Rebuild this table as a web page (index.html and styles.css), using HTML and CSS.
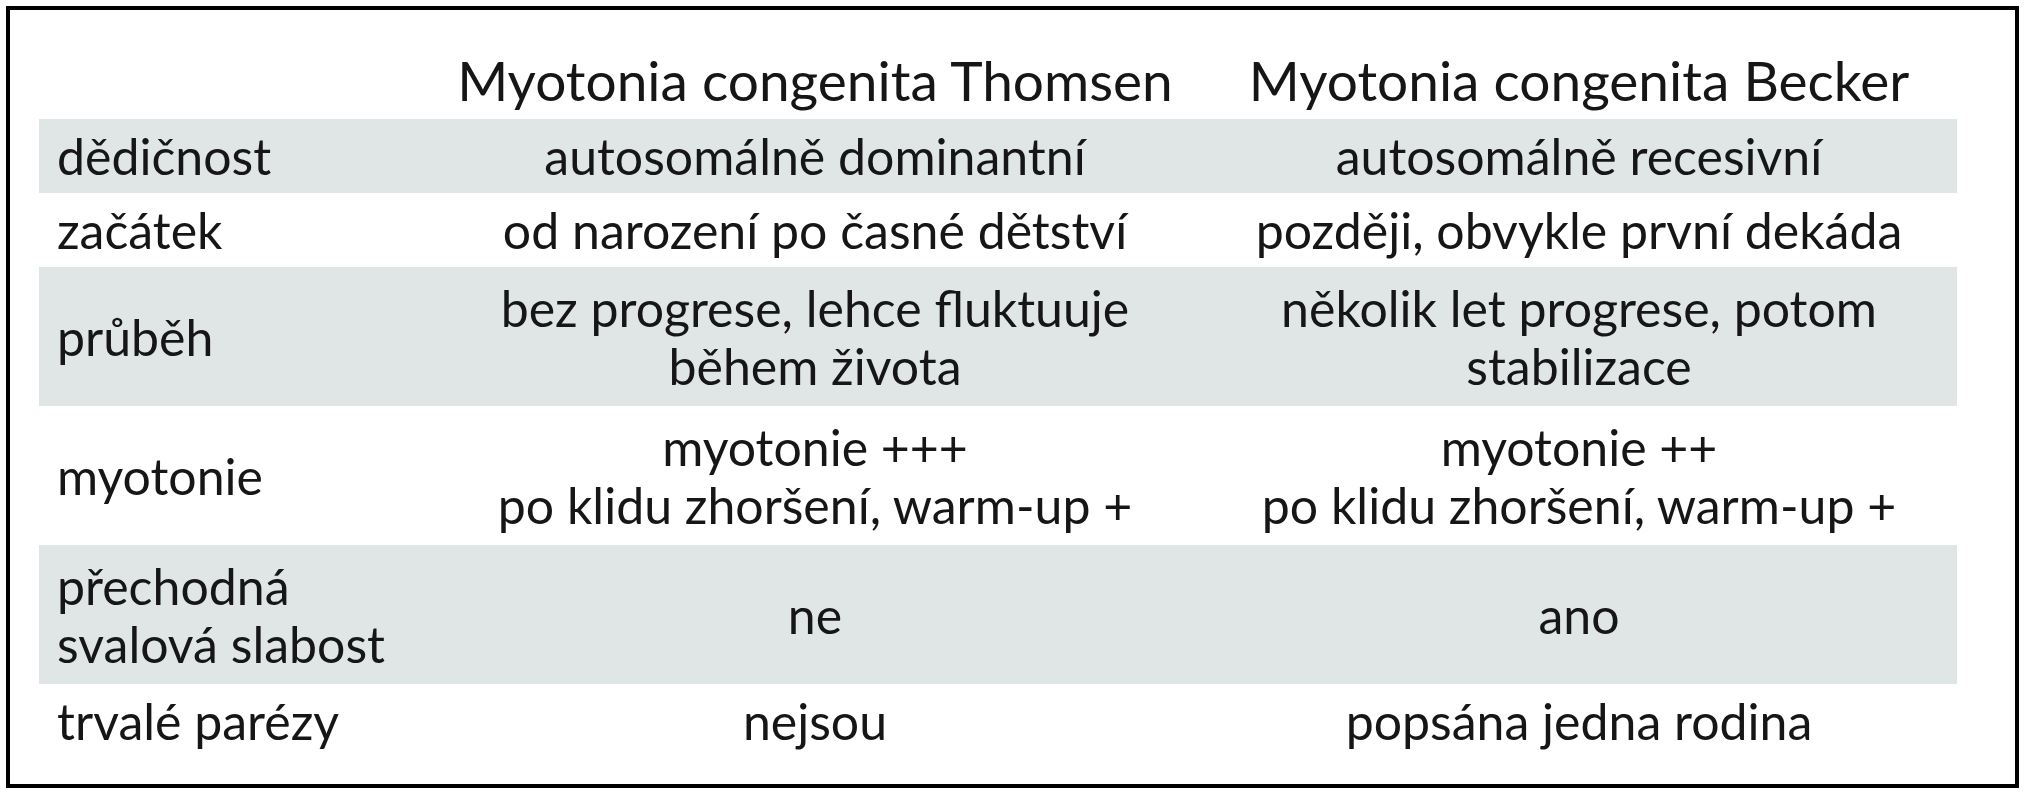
FILE: index.html
```html
<!DOCTYPE html>
<html lang="cs">
<head>
<meta charset="utf-8">
<title>Myotonia congenita</title>
<link rel="stylesheet" href="styles.css">
</head>
<body>
<div class="frame">
  <div class="table">
    <div class="row head">
      <div class="cell label"></div>
      <div class="cell">Myotonia congenita Thomsen</div>
      <div class="cell">Myotonia congenita Becker</div>
    </div>
    <div class="row one shaded">
      <div class="cell label">dědičnost</div>
      <div class="cell">autosomálně dominantní</div>
      <div class="cell">autosomálně recesivní</div>
    </div>
    <div class="row one">
      <div class="cell label">začátek</div>
      <div class="cell">od narození po časné dětství</div>
      <div class="cell">později, obvykle první dekáda</div>
    </div>
    <div class="row two shaded">
      <div class="cell label">průběh</div>
      <div class="cell">bez progrese, lehce fluktuuje<br>během života</div>
      <div class="cell">několik let progrese, potom<br>stabilizace</div>
    </div>
    <div class="row two">
      <div class="cell label">myotonie</div>
      <div class="cell">myotonie +++<br>po klidu zhoršení, warm-up +</div>
      <div class="cell">myotonie ++<br>po klidu zhoršení, warm-up +</div>
    </div>
    <div class="row two shaded">
      <div class="cell label">přechodná<br>svalová slabost</div>
      <div class="cell">ne</div>
      <div class="cell">ano</div>
    </div>
    <div class="row one">
      <div class="cell label">trvalé parézy</div>
      <div class="cell">nejsou</div>
      <div class="cell">popsána jedna rodina</div>
    </div>
  </div>
</div>
</body>
</html>
```
FILE: styles.css
```css
html, body {
  margin: 0;
  padding: 0;
  background: #ffffff;
}

body {
  font-family: Lato, "Open Sans", "Noto Sans", sans-serif;
  font-size: 50px;
  line-height: 58px;
  color: #161616;
}

.frame {
  margin: 6px 0 0 6px;
  width: 1918px;
  padding: 0 58px 26px 29px;
  border: 4px solid #000000;
}

.table {
  display: flex;
  flex-direction: column;
}

.row {
  display: grid;
  grid-template-columns: 390px 772px 756px;
  align-items: center;
}

.row.head {
  height: 109px;
  align-items: end;
  font-size: 55px;
}

.row.head .cell {
  padding-bottom: 10px;
}

.row.one {
  height: 74px;
}

.row.two {
  height: 139px;
}

.row.shaded {
  background: #e0e6e6;
}

.cell {
  text-align: center;
  white-space: nowrap;
}

.cell.label {
  text-align: left;
  padding-left: 18px;
}
```
